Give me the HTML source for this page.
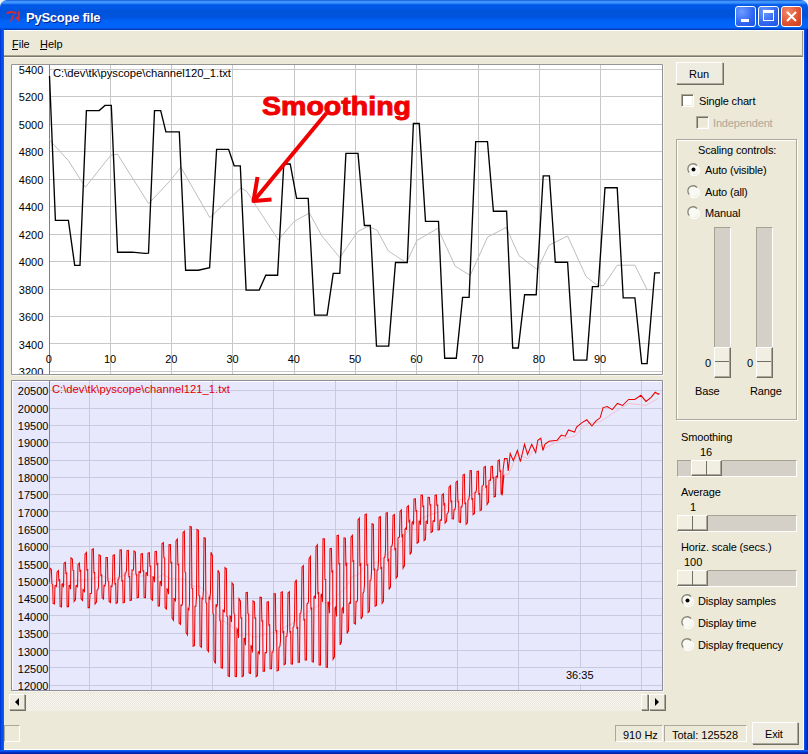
<!DOCTYPE html><html><head><meta charset="utf-8"><style>
*{margin:0;padding:0;box-sizing:border-box}
html,body{width:808px;height:754px;overflow:hidden;background:#ECE9D8;font-family:"Liberation Sans", sans-serif;font-size:11px;color:#000}
.a{position:absolute}
.t{position:absolute;white-space:nowrap;line-height:1}
.btn{position:absolute;background:#EEEBE0;border-top:1px solid #FFFFFF;border-left:1px solid #FFFFFF;border-right:1px solid #ACA899;border-bottom:1px solid #ACA899;box-shadow:1px 1px 0 #716F64}
.cb{position:absolute;width:13px;height:13px;border-top:1px solid #ACA899;border-left:1px solid #ACA899;border-right:1px solid #FFFFFF;border-bottom:1px solid #FFFFFF;background:#fff;box-shadow:inset 1px 1px 0 #716F64, inset -1px -1px 0 #F1EFE2}
.trk{position:absolute;background:#D4D0C8;border-top:1px solid #A5A291;border-left:1px solid #A5A291;border-right:1px solid #FFFFFF;border-bottom:1px solid #FFFFFF}
.thumb{position:absolute;background:#F1EFE2;border-top:1px solid #FFFFFF;border-left:1px solid #FFFFFF;border-right:1px solid #716F64;border-bottom:1px solid #716F64;box-shadow:inset -1px -1px 0 #ACA899}
.sunk{position:absolute;border-top:1px solid #ACA899;border-left:1px solid #ACA899;border-right:1px solid #FFFFFF;border-bottom:1px solid #FFFFFF}
</style></head><body>
<div class="a" style="left:0;top:0;width:10px;height:10px;background:#EEF0F4"></div>
<div class="a" style="left:798px;top:0;width:10px;height:10px;background:#EEF0F4"></div>
<div class="a" style="left:0;top:0;width:808px;height:30px;border-radius:7px 7px 0 0;background:linear-gradient(to bottom,#0A3FC0 0px,#3D95FF 1px,#3D95FF 3px,#1A6CF2 4px,#0058E8 5px,#0058E8 8px,#0054DC 10px,#0054DC 16px,#0057E2 18px,#0060F4 20px,#0064FA 24px,#0064FA 28px,#003DBB 29px,#003DBB 30px)"></div>
<div class="a" style="left:0;top:29px;width:4px;height:725px;background:linear-gradient(to right,#0020C0,#0050F0 1px,#0050F0 3px,#1E6AFA 4px)"></div>
<div class="a" style="left:804px;top:29px;width:4px;height:725px;background:linear-gradient(to right,#1060F8,#0040E0 1px,#0030C8 3px,#0018A0 4px)"></div>
<div class="a" style="left:4px;top:749px;width:800px;height:1px;background:#FFFFFF"></div>
<div class="a" style="left:803px;top:57px;width:1px;height:693px;background:#FFFFFF"></div>
<div class="a" style="left:802px;top:31px;width:1px;height:25px;background:#9C9A88"></div>
<div class="a" style="left:0;top:750px;width:808px;height:4px;background:linear-gradient(to bottom,#1E6AFA,#0050F0 1px,#0040D8 2px,#0020A8 3px)"></div>
<div class="a" style="left:4px;top:30px;width:800px;height:1px;background:#fff"></div>
<svg class="a" style="left:0;top:0" width="26" height="26"><path d="M7.5 13 Q11 11 15.5 13" stroke="#D82838" stroke-width="2.2" fill="none" stroke-linecap="round"/><path d="M13.5 15.5 L11 21" stroke="#C83040" stroke-width="1.8" fill="none" stroke-linecap="round"/><path d="M19 12 L18.5 20.5 M16 18.5 L19 16.5" stroke="#C83040" stroke-width="2" fill="none" stroke-linecap="round"/></svg>
<div class="t" style="left:26px;top:11px;font-size:13px;font-weight:bold;color:#fff;letter-spacing:-0.25px;text-shadow:1px 1px 0 #0A1E8C">PyScope file</div>
<div class="a" style="left:735px;top:6px;width:21px;height:21px;border:1px solid #fff;border-radius:3px;background:radial-gradient(circle at 30% 25%,#6E9BFF,#2F66F0 60%,#1E52E0)"></div>
<div class="a" style="left:758px;top:6px;width:21px;height:21px;border:1px solid #fff;border-radius:3px;background:radial-gradient(circle at 30% 25%,#6E9BFF,#2F66F0 60%,#1E52E0)"></div>
<div class="a" style="left:781px;top:6px;width:21px;height:21px;border:1px solid #fff;border-radius:3px;background:radial-gradient(circle at 30% 25%,#F08A6A,#E0502E 60%,#C8401E)"></div>
<div class="a" style="left:741px;top:19px;width:8px;height:3px;background:#fff"></div>
<div class="a" style="left:763px;top:10px;width:11px;height:11px;border:1px solid #fff;border-top-width:3px"></div>
<svg class="a" style="left:781px;top:6px" width="21" height="21"><path d="M6 6 L15 15 M15 6 L6 15" stroke="#fff" stroke-width="2"/></svg>
<div class="t" style="left:12px;top:39px;font-size:11px">File</div>
<div class="t" style="left:40px;top:39px;font-size:11px">Help</div>
<div class="a" style="left:12px;top:49px;width:6px;height:1px;background:#000"></div>
<div class="a" style="left:40px;top:49px;width:7px;height:1px;background:#000"></div>
<div class="a" style="left:4px;top:55px;width:799px;height:1px;background:#A8A490"></div>
<div class="a" style="left:4px;top:56px;width:799px;height:1px;background:#7A7868"></div>
<div class="a" style="left:4px;top:57px;width:799px;height:1px;background:#F8F6EE"></div>
<svg class="a" style="left:0;top:0" width="808" height="754" shape-rendering="auto"><defs><clipPath id="c1"><rect x="12" y="65" width="650" height="309"/></clipPath></defs><rect x="11" y="64" width="652" height="311" fill="#fff"/><path d="M11.5 374.5 V64.5 H662.5 V374.5 H11.5" stroke="#959595" fill="none"/><path d="M12.5 375.5 H663.5 V65" stroke="#F6F5EE" fill="none"/><path d="M50 69.5H662 M50 96.5H662 M50 124.5H662 M50 151.5H662 M50 179.5H662 M50 206.5H662 M50 234.5H662 M50 261.5H662 M50 289.5H662 M50 316.5H662 M50 343.5H662 M50 371.5H662 M110.5 65V374 M171.5 65V374 M232.5 65V374 M294.5 65V374 M355.5 65V374 M416.5 65V374 M478.5 65V374 M539.5 65V374 M600.5 65V374" stroke="#C8C8C8" stroke-width="1" fill="none" shape-rendering="crispEdges"/><path d="M49.5 65V374" stroke="#808080" stroke-width="1" shape-rendering="crispEdges"/><polyline points="49.5,139.6 50.5,141.1 68.3,160.5 85.4,187.2 110.7,155.3 117.4,154.1 148.6,203.6 170.4,180.5 180.8,167.1 209.8,217.6 241.0,187.9 246.9,191.6 278.2,239.8 294.5,221.2 309.4,213.0 322.0,236.1 339.8,257.6 357.7,231.6 368.1,226.4 377.0,230.1 388.4,251.0 406.4,262.7 417.0,240.4 437.8,228.3 455.2,266.1 470.2,275.4 487.6,237.1 506.2,227.4 519.0,255.7 537.4,269.6 549.0,245.2 567.6,236.0 586.1,276.6 597.7,285.7 603.6,285.6 617.2,265.2 634.9,265.2 647.1,289.6 660.0,289.6" stroke="#BEBEBE" stroke-width="1" fill="none"/><polyline points="49.5,76.0 55.4,220.3 68.4,220.3 74.7,265.3 80.0,265.3 86.4,110.6 99.2,110.6 105.0,105.4 111.3,105.4 117.6,252.2 132.0,252.2 145.0,253.3 148.5,253.2 154.5,110.6 160.7,110.6 165.9,131.9 179.3,131.9 185.6,270.2 198.4,270.2 209.6,267.7 216.6,149.3 228.6,149.3 234.2,165.8 240.3,165.8 246.1,290.1 259.2,290.1 265.8,275.2 277.6,275.2 283.8,164.0 290.2,164.0 296.6,198.4 308.2,198.4 314.6,315.1 327.1,315.1 333.2,273.3 339.8,273.3 345.9,153.4 358.0,153.4 364.4,225.5 370.3,225.5 376.5,346.1 388.7,346.1 395.5,262.5 407.3,262.5 413.4,123.5 419.2,123.5 425.5,221.3 438.5,221.3 444.7,358.2 456.3,358.2 462.6,297.4 469.1,297.4 475.7,141.6 487.5,141.6 493.4,211.2 506.6,211.2 512.7,348.0 518.3,348.0 524.6,294.7 536.2,294.7 543.2,175.8 549.4,175.8 555.3,262.2 567.6,262.2 573.8,360.1 586.8,360.1 592.4,286.6 598.3,286.6 605.0,187.7 617.2,187.7 623.2,297.8 634.9,297.8 641.7,363.6 647.1,363.6 654.7,272.8 660.0,272.8" stroke="#000" stroke-width="1.35" fill="none" stroke-linejoin="miter"/><text x="43.3" y="73.5" text-anchor="end" font-family='"Liberation Sans"' font-size="11" clip-path="url(#c1)">5400</text><text x="43.3" y="101.0" text-anchor="end" font-family='"Liberation Sans"' font-size="11" clip-path="url(#c1)">5200</text><text x="43.3" y="128.5" text-anchor="end" font-family='"Liberation Sans"' font-size="11" clip-path="url(#c1)">5000</text><text x="43.3" y="156.0" text-anchor="end" font-family='"Liberation Sans"' font-size="11" clip-path="url(#c1)">4800</text><text x="43.3" y="183.5" text-anchor="end" font-family='"Liberation Sans"' font-size="11" clip-path="url(#c1)">4600</text><text x="43.3" y="211.0" text-anchor="end" font-family='"Liberation Sans"' font-size="11" clip-path="url(#c1)">4400</text><text x="43.3" y="238.5" text-anchor="end" font-family='"Liberation Sans"' font-size="11" clip-path="url(#c1)">4200</text><text x="43.3" y="266.0" text-anchor="end" font-family='"Liberation Sans"' font-size="11" clip-path="url(#c1)">4000</text><text x="43.3" y="293.5" text-anchor="end" font-family='"Liberation Sans"' font-size="11" clip-path="url(#c1)">3800</text><text x="43.3" y="321.0" text-anchor="end" font-family='"Liberation Sans"' font-size="11" clip-path="url(#c1)">3600</text><text x="43.3" y="348.5" text-anchor="end" font-family='"Liberation Sans"' font-size="11" clip-path="url(#c1)">3400</text><text x="43.3" y="376.0" text-anchor="end" font-family='"Liberation Sans"' font-size="11" clip-path="url(#c1)">3200</text><text x="48.8" y="363" text-anchor="middle" font-family='"Liberation Sans"' font-size="11">0</text><text x="110.1" y="363" text-anchor="middle" font-family='"Liberation Sans"' font-size="11">10</text><text x="171.3" y="363" text-anchor="middle" font-family='"Liberation Sans"' font-size="11">20</text><text x="232.6" y="363" text-anchor="middle" font-family='"Liberation Sans"' font-size="11">30</text><text x="293.8" y="363" text-anchor="middle" font-family='"Liberation Sans"' font-size="11">40</text><text x="355.1" y="363" text-anchor="middle" font-family='"Liberation Sans"' font-size="11">50</text><text x="416.4" y="363" text-anchor="middle" font-family='"Liberation Sans"' font-size="11">60</text><text x="477.6" y="363" text-anchor="middle" font-family='"Liberation Sans"' font-size="11">70</text><text x="538.9" y="363" text-anchor="middle" font-family='"Liberation Sans"' font-size="11">80</text><text x="600.1" y="363" text-anchor="middle" font-family='"Liberation Sans"' font-size="11">90</text><text x="53" y="77" font-family='"Liberation Sans"' font-size="11" textLength="178" lengthAdjust="spacingAndGlyphs">C:\dev\tk\pyscope\channel120_1.txt</text><text x="262" y="114.5" font-family='"Liberation Sans"' font-weight="bold" font-size="25" fill="#F00000" stroke="#F00000" stroke-width="0.9" textLength="149" lengthAdjust="spacingAndGlyphs">Smoothing</text><path d="M326.5 113 L254.5 200" stroke="#F00000" stroke-width="4" fill="none"/><path d="M257.5 177 L253.5 201 L271.5 199.5" stroke="#F00000" stroke-width="4" fill="none" stroke-linejoin="round"/><rect x="11" y="380" width="652" height="311" fill="#E7E8FC"/><path d="M11.5 690.5 V380.5 H662.5 V690.5 H11.5" stroke="#8C8C9C" fill="none"/><path d="M12.5 691.5 H663.5 V381" stroke="#F6F5EE" fill="none"/><path d="M12.5 690 V381.5 H662" stroke="#FFFFFF" fill="none" shape-rendering="crispEdges"/><path d="M50 390.5H662 M50 408.5H662 M50 425.5H662 M50 442.5H662 M50 460.5H662 M50 477.5H662 M50 494.5H662 M50 511.5H662 M50 529.5H662 M50 546.5H662 M50 563.5H662 M50 581.5H662 M50 598.5H662 M50 615.5H662 M50 633.5H662 M50 650.5H662 M50 667.5H662 M50 685.5H662 M89.5 381V690 M151.5 381V690 M212.5 381V690 M273.5 381V690 M335.5 381V690 M396.5 381V690 M457.5 381V690 M518.5 381V690 M580.5 381V690 M641.5 381V690" stroke="#C9CADF" stroke-width="1" fill="none" shape-rendering="crispEdges"/><path d="M49.5 381V690" stroke="#808090" stroke-width="1" shape-rendering="crispEdges"/><polyline points="49.0,584.5 52.0,586.5 55.0,588.5 58.0,587.2 61.0,585.9 64.0,584.8 67.0,583.6 70.0,582.5 73.0,581.6 76.0,580.6 79.0,580.0 82.0,580.0 85.0,580.0 88.0,579.8 91.0,579.1 94.0,578.5 97.0,577.4 100.0,576.2 103.0,576.0 106.0,577.3 109.0,578.6 112.0,580.0 115.0,578.7 118.0,577.4 121.0,576.2 124.0,575.5 127.0,574.8 130.0,574.0 133.0,574.6 136.0,575.2 139.0,575.8 142.0,575.9 145.0,575.8 148.0,575.6 151.0,575.9 154.0,577.2 157.0,578.5 160.0,576.2 163.0,574.0 166.0,576.1 169.0,578.3 172.0,579.0 175.0,579.0 178.0,579.0 181.0,579.0 184.0,579.0 187.0,581.0 190.0,584.0 193.0,586.1 196.0,586.3 199.0,586.5 202.0,588.2 205.0,589.9 208.0,594.5 211.0,600.5 214.0,606.9 217.0,613.6 220.0,618.6 223.0,620.6 226.0,622.5 229.0,624.4 232.0,626.4 235.0,629.7 238.0,633.8 241.0,636.2 244.0,635.2 247.0,634.3 250.0,635.0 253.0,636.5 256.0,637.1 259.0,636.1 262.0,635.0 265.0,634.4 268.0,633.8 271.0,633.2 274.0,632.8 277.0,632.6 280.0,630.9 283.0,628.6 286.0,626.6 289.0,625.2 292.0,623.9 295.0,621.5 298.0,618.5 301.0,615.9 304.0,614.3 307.0,612.6 310.0,610.9 313.0,608.9 316.0,607.0 319.0,605.1 322.0,603.1 325.0,602.8 328.0,603.1 331.0,603.5 334.0,599.6 337.0,595.8 340.0,592.8 343.0,590.2 346.0,586.9 349.0,581.9 352.0,577.0 355.0,575.9 358.0,574.9 361.0,571.5 364.0,567.0 367.0,563.9 370.0,563.7 373.0,563.5 376.0,562.0 379.0,560.5 382.0,558.6 385.0,556.1 388.0,553.5 391.0,551.1 394.0,548.5 397.0,545.5 400.0,542.5 403.0,538.0 406.0,533.5 409.0,529.3 412.0,525.2 415.0,522.0 418.0,520.5 421.0,519.0 424.0,517.5 427.0,516.0 430.0,514.8 433.0,513.7 436.0,512.7 439.0,511.9 442.0,511.0 445.0,507.8 448.0,504.6 451.0,502.6 454.0,501.3 457.0,500.0 460.0,499.8 463.0,499.6 466.0,498.2 469.0,496.3 472.0,494.6 475.0,493.3 478.0,492.0 481.0,490.3 484.0,488.6 487.0,486.1 490.0,483.4 493.0,480.9 496.0,479.2 499.0,477.5 502.0,476.8 503.1,473.8 508.2,474.9 517.4,454.5 527.6,458.5 537.8,444.2 544.9,448.3 561.3,439.1 574.5,436.1 586.8,423.8 600.1,421.8 612.3,413.6 628.6,403.4 646.0,405.4 658.3,398.3" stroke="#F2C0CC" stroke-width="1" fill="none"/><polyline points="49.5,581.7 50.0,568.1 51.4,569.5 51.9,583.8 52.7,584.4 53.1,603.4 54.5,603.9 55.0,585.7 55.9,585.2 56.5,586.8 57.0,572.2 58.4,570.6 58.9,580.5 59.7,580.0 60.1,606.4 61.5,606.9 62.0,584.2 62.9,583.8 63.5,587.3 64.0,563.2 65.4,562.2 65.9,573.4 66.7,573.0 67.1,606.6 68.5,606.6 69.0,585.4 69.9,585.1 70.5,589.2 71.0,557.9 72.4,559.0 72.9,570.4 73.7,570.6 74.1,601.4 75.5,599.5 76.0,585.8 76.9,585.3 77.5,587.4 78.0,564.6 79.4,563.1 79.9,571.0 80.7,570.5 81.1,598.9 82.5,600.5 83.0,589.6 83.9,590.0 84.5,592.3 85.0,554.2 86.4,552.4 86.9,570.0 87.7,569.7 88.1,607.6 89.5,607.6 90.0,593.5 90.9,593.4 91.5,593.1 92.0,549.5 93.4,548.9 93.9,572.6 94.7,572.5 95.1,603.9 96.5,602.1 97.0,590.2 97.9,589.5 98.5,586.7 99.0,554.8 100.4,555.5 100.9,575.3 101.7,575.0 102.1,597.6 103.5,599.0 104.0,585.4 104.9,586.0 105.5,582.9 106.0,557.5 107.4,557.5 107.9,581.0 108.7,581.4 109.1,601.2 110.5,602.5 111.0,586.1 111.9,586.6 112.5,581.8 113.0,555.3 114.4,554.8 114.9,583.9 115.7,583.5 116.1,603.3 117.5,602.6 118.0,579.4 118.9,579.0 119.5,574.6 120.0,550.0 121.4,549.8 121.9,580.9 122.7,580.7 123.1,602.8 124.5,602.4 125.0,573.2 125.9,572.9 126.5,570.2 127.0,550.6 128.4,550.3 128.9,576.8 129.7,576.6 130.1,600.5 131.5,600.1 132.0,569.9 132.9,570.2 133.5,569.9 134.0,551.0 135.4,552.0 135.9,574.0 136.7,574.2 137.1,597.7 138.5,597.3 139.0,571.6 139.9,571.8 140.5,573.2 141.0,554.1 142.4,553.5 142.9,570.9 143.7,570.8 144.1,597.3 145.5,597.7 146.0,572.7 146.9,572.6 147.5,575.8 148.0,553.2 149.4,552.7 149.9,566.2 150.7,566.3 151.1,598.8 152.5,600.3 153.0,576.9 153.9,577.3 154.5,582.3 155.0,551.6 156.4,551.3 156.9,564.4 157.7,563.6 158.1,606.0 159.5,605.9 160.0,581.8 160.9,581.3 161.5,586.3 162.0,543.8 163.4,542.6 163.9,557.6 164.7,558.1 165.1,607.7 166.5,609.1 167.0,588.8 167.9,589.6 168.5,594.2 169.0,544.8 170.4,544.6 170.9,562.9 171.7,562.4 172.1,618.0 173.5,620.2 174.0,598.5 174.9,599.1 175.5,601.5 176.0,541.0 177.4,539.1 177.9,564.6 178.7,564.4 179.1,623.1 180.5,624.4 181.0,605.0 181.9,605.4 182.5,603.4 183.0,532.5 184.4,531.2 184.9,572.1 185.7,572.7 186.1,632.6 187.5,634.9 188.0,608.5 188.9,609.7 189.5,603.5 190.0,526.4 191.4,526.8 191.9,588.4 192.7,588.5 193.1,646.3 194.5,645.7 195.0,606.3 195.9,606.2 196.5,596.5 197.0,529.5 198.4,530.3 198.9,595.6 199.7,596.0 200.1,646.1 201.5,647.3 202.0,598.3 202.9,598.9 203.5,589.2 204.0,537.7 205.4,538.1 205.9,602.3 206.7,603.7 207.1,649.7 208.5,651.6 209.0,596.7 209.9,598.5 210.5,592.1 211.0,552.2 212.4,555.7 212.9,613.1 213.7,614.9 214.1,660.7 215.5,663.5 216.0,604.2 216.9,606.2 217.5,604.0 218.0,570.3 219.4,573.1 219.9,620.6 220.7,621.1 221.1,667.7 222.5,668.3 223.0,610.1 223.9,610.7 224.5,612.2 225.0,567.6 226.4,568.8 226.9,616.4 227.7,617.0 228.1,675.8 229.5,676.4 230.0,615.9 230.9,616.5 231.5,622.1 232.0,582.9 233.4,584.7 233.9,613.4 234.7,614.8 235.1,676.3 236.5,676.6 237.0,628.8 237.9,630.2 238.5,637.9 239.0,598.7 240.4,601.0 240.9,618.0 241.7,617.8 242.1,676.7 243.5,676.0 244.0,638.5 244.9,638.2 245.5,645.2 246.0,592.6 247.4,592.4 247.9,613.7 248.7,614.0 249.1,672.8 250.5,673.4 251.0,645.7 251.9,646.2 252.5,652.5 253.0,601.0 254.4,601.8 254.9,618.1 255.7,618.1 256.1,676.6 257.5,675.4 258.0,652.0 258.9,651.5 259.5,654.5 260.0,597.2 261.4,597.4 261.9,621.0 262.7,620.8 263.1,671.3 264.5,671.3 265.0,652.7 265.9,652.6 266.5,652.7 267.0,602.2 268.4,601.7 268.9,625.1 269.7,624.9 270.1,668.8 271.5,668.7 272.0,652.2 272.9,652.1 273.5,648.9 274.0,593.8 275.4,593.8 275.9,630.8 276.7,630.7 277.1,670.9 278.5,670.2 279.0,647.5 279.9,646.6 280.5,640.7 281.0,592.3 282.4,591.8 282.9,632.3 283.7,631.6 284.1,664.8 285.5,663.8 286.0,636.4 286.9,636.2 287.5,629.6 288.0,592.9 289.4,591.6 289.9,632.1 290.7,631.8 291.1,663.9 292.5,664.1 293.0,627.5 293.9,626.6 294.5,619.4 295.0,582.5 296.4,579.8 296.9,628.1 297.7,627.5 298.1,662.3 299.5,662.3 300.0,613.6 300.9,613.0 301.5,607.5 302.0,567.2 303.4,565.6 303.9,619.9 304.7,619.5 305.1,660.0 306.5,659.9 307.0,603.9 307.9,603.3 308.5,601.4 309.0,558.8 310.4,556.4 310.9,608.6 311.7,608.1 312.1,661.6 313.5,662.1 314.0,596.8 314.9,596.0 315.5,598.8 316.0,546.6 317.4,544.8 317.9,593.4 318.7,592.8 319.1,664.9 320.5,664.9 321.0,594.8 321.9,594.1 322.5,601.9 323.0,538.8 324.4,538.8 324.9,579.3 325.7,579.4 326.1,667.1 327.5,667.4 328.0,602.1 328.9,602.3 329.5,613.3 330.0,548.7 331.4,548.4 331.9,571.8 332.7,571.0 333.1,659.3 334.5,656.8 335.0,608.0 335.9,606.8 336.5,616.4 337.0,535.6 338.4,535.2 338.9,563.8 339.7,563.7 340.1,644.9 341.5,641.7 342.0,608.8 342.9,607.5 343.5,613.4 344.0,537.9 345.4,538.1 345.9,564.8 346.7,563.6 347.1,633.4 348.5,630.6 349.0,603.8 349.9,602.2 350.5,603.7 351.0,537.1 352.4,535.3 352.9,561.3 353.7,560.7 354.1,623.2 355.5,624.1 356.0,601.7 356.9,601.8 357.5,600.2 358.0,519.9 359.4,518.1 359.9,565.1 360.7,564.0 361.1,619.1 362.5,616.2 363.0,593.2 363.9,591.6 364.5,584.8 365.0,514.5 366.4,514.0 366.9,565.0 367.7,564.9 368.1,612.5 369.5,611.1 370.0,580.6 370.9,580.2 371.5,572.6 372.0,523.8 373.4,524.3 373.9,569.6 374.7,569.2 375.1,606.1 376.5,605.4 377.0,570.2 377.9,569.8 378.5,561.8 379.0,517.3 380.4,516.6 380.9,568.4 381.7,567.7 382.1,603.3 383.5,601.2 384.0,558.0 384.9,557.2 385.5,550.7 386.0,513.1 387.4,512.7 387.9,560.4 388.7,559.6 389.1,589.6 390.5,586.8 391.0,546.8 391.9,546.2 392.5,543.1 393.0,515.6 394.4,514.6 394.9,549.5 395.7,548.7 396.1,578.0 397.5,576.2 398.0,538.1 398.9,537.3 399.5,537.0 400.0,511.4 401.4,509.8 401.9,536.4 402.7,535.2 403.1,568.1 404.5,565.5 405.0,529.3 405.9,528.0 406.5,529.9 407.0,506.9 408.4,505.7 408.9,521.5 409.7,520.5 410.1,554.6 411.5,551.8 412.0,522.7 412.9,521.5 413.5,524.6 414.0,499.2 415.4,498.7 415.9,511.1 416.7,510.8 417.1,543.3 418.5,542.3 419.0,521.3 419.9,520.9 420.5,524.8 421.0,495.2 422.4,495.0 422.9,506.6 423.7,506.3 424.1,540.5 425.5,539.3 426.0,521.6 426.9,521.0 427.5,524.0 428.0,497.3 429.4,497.4 429.9,504.9 430.7,504.8 431.1,532.5 432.5,531.4 433.0,521.0 433.9,520.5 434.5,521.9 435.0,495.4 436.4,495.0 436.9,505.4 437.7,505.1 438.1,530.1 439.5,529.7 440.0,520.2 440.9,519.9 441.5,520.1 442.0,495.1 443.4,493.9 443.9,504.7 444.7,503.8 445.1,523.1 446.5,521.3 447.0,514.0 447.9,513.0 448.5,511.1 449.0,487.2 450.4,485.6 450.9,501.4 451.7,501.0 452.1,518.7 453.5,518.9 454.0,509.8 454.9,509.7 455.5,506.8 456.0,482.2 457.4,481.0 457.9,501.8 458.7,501.8 459.1,521.8 460.5,522.5 461.0,506.9 461.9,507.0 462.5,502.7 463.0,475.1 464.4,474.3 464.9,503.6 465.7,503.1 466.1,524.3 467.5,522.9 468.0,500.0 468.9,499.3 469.5,494.9 470.0,470.7 471.4,470.5 471.9,499.2 472.7,498.8 473.1,514.6 474.5,513.4 475.0,492.3 475.9,492.0 476.5,489.2 477.0,471.4 478.4,471.1 478.9,494.2 479.7,493.7 480.1,510.5 481.5,509.9 482.0,486.3 482.9,485.7 483.5,484.5 484.0,467.2 485.4,466.4 485.9,487.0 486.7,486.2 487.1,504.5 488.5,502.2 489.0,480.5 489.9,479.8 490.5,480.2 491.0,466.7 492.4,466.2 492.9,478.0 493.7,477.5 494.1,496.9 495.5,496.3 496.0,476.6 496.9,476.0 497.5,477.7 498.0,460.8 499.4,459.9 499.9,471.2 500.7,470.9 501.1,493.6 502.5,493.6 503.0,475.8 503.9,475.8 502.0,495.4 503.1,469.8 504.5,458.6 507.1,458.6 508.2,470.9 510.2,453.5 513.3,460.7 517.4,450.5 520.4,461.7 524.5,444.3 527.6,454.5 531.7,444.3 535.7,452.5 537.8,440.2 540.8,438.2 542.9,450.5 544.9,444.3 549.0,441.3 557.2,440.2 561.3,435.1 565.3,436.2 568.4,430.0 574.5,432.1 576.6,427.0 581.7,422.9 586.8,419.8 591.9,426.0 596.0,420.8 600.1,417.8 603.1,407.6 607.2,406.5 612.3,409.6 617.4,403.5 622.5,405.5 628.6,399.4 634.8,399.4 640.9,395.3 646.0,401.4 651.1,397.4 655.2,392.3 658.3,394.3 659.3,393.3" stroke="#EE0000" stroke-width="1.05" fill="none"/><text x="48.4" y="395.2" text-anchor="end" font-family='"Liberation Sans"' font-size="11">20500</text><text x="48.4" y="412.6" text-anchor="end" font-family='"Liberation Sans"' font-size="11">20000</text><text x="48.4" y="429.9" text-anchor="end" font-family='"Liberation Sans"' font-size="11">19500</text><text x="48.4" y="447.2" text-anchor="end" font-family='"Liberation Sans"' font-size="11">19000</text><text x="48.4" y="464.6" text-anchor="end" font-family='"Liberation Sans"' font-size="11">18500</text><text x="48.4" y="481.9" text-anchor="end" font-family='"Liberation Sans"' font-size="11">18000</text><text x="48.4" y="499.3" text-anchor="end" font-family='"Liberation Sans"' font-size="11">17500</text><text x="48.4" y="516.6" text-anchor="end" font-family='"Liberation Sans"' font-size="11">17000</text><text x="48.4" y="534.0" text-anchor="end" font-family='"Liberation Sans"' font-size="11">16500</text><text x="48.4" y="551.4" text-anchor="end" font-family='"Liberation Sans"' font-size="11">16000</text><text x="48.4" y="568.7" text-anchor="end" font-family='"Liberation Sans"' font-size="11">15500</text><text x="48.4" y="586.0" text-anchor="end" font-family='"Liberation Sans"' font-size="11">15000</text><text x="48.4" y="603.4" text-anchor="end" font-family='"Liberation Sans"' font-size="11">14500</text><text x="48.4" y="620.8" text-anchor="end" font-family='"Liberation Sans"' font-size="11">14000</text><text x="48.4" y="638.1" text-anchor="end" font-family='"Liberation Sans"' font-size="11">13500</text><text x="48.4" y="655.5" text-anchor="end" font-family='"Liberation Sans"' font-size="11">13000</text><text x="48.4" y="672.8" text-anchor="end" font-family='"Liberation Sans"' font-size="11">12500</text><text x="48.4" y="690.2" text-anchor="end" font-family='"Liberation Sans"' font-size="11">12000</text><text x="52" y="393" font-family='"Liberation Sans"' font-size="11" fill="#E00000" textLength="178" lengthAdjust="spacingAndGlyphs">C:\dev\tk\pyscope\channel121_1.txt</text><rect x="565" y="668" width="29" height="16" fill="#E7E8FC"/><text x="566" y="679" font-family='"Liberation Sans"' font-size="11">36:35</text></svg>
<div class="a" style="left:26px;top:693px;width:616px;height:18px;background:repeating-conic-gradient(#F8F7F2 0 25%,#E8E6DA 0 50%) 0 0/2px 2px"></div>
<div class="btn" style="left:9px;top:694px;width:16px;height:16px"></div>
<svg class="a" style="left:9px;top:694px" width="16" height="16"><path d="M10 4 L6 8 L10 12Z" fill="#000"/></svg>
<div class="btn" style="left:641px;top:694px;width:7px;height:16px"></div>
<div class="btn" style="left:649px;top:694px;width:16px;height:16px"></div>
<svg class="a" style="left:649px;top:694px" width="16" height="16"><path d="M6 4 L10 8 L6 12Z" fill="#000"/></svg>
<div class="sunk" style="left:4px;top:725px;width:16px;height:17px"></div>
<div class="sunk" style="left:615px;top:725px;width:48px;height:17px"></div>
<div class="t" style="left:623px;top:730px">910 Hz</div>
<div class="sunk" style="left:664px;top:725px;width:83px;height:17px"></div>
<div class="t" style="left:672px;top:730px">Total: 125528</div>
<div class="btn" style="left:752px;top:722px;width:46px;height:22px"></div>
<div class="t" style="letter-spacing:-0.15px;left:765px;top:729px">Exit</div>
<div class="btn" style="left:676px;top:62px;width:47px;height:22px"></div>
<div class="t" style="left:689px;top:69px">Run</div>
<div class="cb" style="left:681px;top:94px"></div>
<div class="t" style="letter-spacing:-0.15px;left:699px;top:96px">Single chart</div>
<div class="cb" style="left:696px;top:116px;background:#ECE9D8"></div>
<div class="t" style="letter-spacing:-0.15px;left:713px;top:118px;color:#ACA899">Independent</div>
<div class="a" style="left:676px;top:139px;width:121px;height:281px;border:1px solid #ACA899;box-shadow:inset 1px 1px 0 #fff, 1px 1px 0 #fff"></div>
<div class="t" style="letter-spacing:-0.15px;left:698px;top:145px">Scaling controls:</div>
<svg class="a" style="left:687px;top:163px" width="14" height="14"><circle cx="6.5" cy="6.5" r="5" fill="#FAFAF4"/><path d="M2.2 9.5 A5 5 0 0 1 10 2.5" stroke="#8A887C" stroke-width="1.3" fill="none"/><path d="M3.5 11 A5 5 0 0 0 11 3.8" stroke="#FFFFFF" stroke-width="1.2" fill="none"/><circle cx="6.5" cy="6.5" r="2" fill="#000"/></svg>
<div class="t" style="letter-spacing:-0.15px;left:705px;top:165px">Auto (visible)</div>
<svg class="a" style="left:687px;top:185px" width="14" height="14"><circle cx="6.5" cy="6.5" r="5" fill="#FAFAF4"/><path d="M2.2 9.5 A5 5 0 0 1 10 2.5" stroke="#8A887C" stroke-width="1.3" fill="none"/><path d="M3.5 11 A5 5 0 0 0 11 3.8" stroke="#FFFFFF" stroke-width="1.2" fill="none"/></svg>
<div class="t" style="letter-spacing:-0.15px;left:705px;top:187px">Auto (all)</div>
<svg class="a" style="left:687px;top:206px" width="14" height="14"><circle cx="6.5" cy="6.5" r="5" fill="#FAFAF4"/><path d="M2.2 9.5 A5 5 0 0 1 10 2.5" stroke="#8A887C" stroke-width="1.3" fill="none"/><path d="M3.5 11 A5 5 0 0 0 11 3.8" stroke="#FFFFFF" stroke-width="1.2" fill="none"/></svg>
<div class="t" style="letter-spacing:-0.15px;left:705px;top:208px">Manual</div>
<div class="trk" style="left:714px;top:227px;width:17px;height:150px"></div>
<div class="trk" style="left:756px;top:227px;width:17px;height:150px"></div>
<div class="thumb" style="left:714px;top:347px;width:17px;height:31px"></div>
<div class="a" style="left:715px;top:361px;width:14px;height:1px;background:#716F64"></div>
<div class="thumb" style="left:756px;top:347px;width:17px;height:31px"></div>
<div class="a" style="left:757px;top:361px;width:14px;height:1px;background:#716F64"></div>
<div class="t" style="left:705px;top:358px">0</div>
<div class="t" style="left:747px;top:358px">0</div>
<div class="t" style="letter-spacing:-0.15px;left:695px;top:386px">Base</div>
<div class="t" style="letter-spacing:-0.15px;left:750px;top:386px">Range</div>
<div class="t" style="letter-spacing:-0.15px;left:681px;top:432px">Smoothing</div>
<div class="t" style="left:700px;top:447px">16</div>
<div class="trk" style="left:677px;top:460px;width:120px;height:17px"></div>
<div class="thumb" style="left:691px;top:460px;width:31px;height:16px"></div>
<div class="a" style="left:706px;top:461px;width:1px;height:14px;background:#716F64"></div>
<div class="t" style="letter-spacing:-0.15px;left:681px;top:487px">Average</div>
<div class="t" style="left:690px;top:502px">1</div>
<div class="trk" style="left:677px;top:515px;width:120px;height:17px"></div>
<div class="thumb" style="left:677px;top:515px;width:31px;height:16px"></div>
<div class="a" style="left:692px;top:516px;width:1px;height:14px;background:#716F64"></div>
<div class="t" style="letter-spacing:-0.15px;left:681px;top:542px">Horiz. scale (secs.)</div>
<div class="t" style="left:684px;top:557px">100</div>
<div class="trk" style="left:677px;top:570px;width:120px;height:17px"></div>
<div class="thumb" style="left:677px;top:570px;width:31px;height:16px"></div>
<div class="a" style="left:692px;top:571px;width:1px;height:14px;background:#716F64"></div>
<svg class="a" style="left:681px;top:594px" width="14" height="14"><circle cx="6.5" cy="6.5" r="5" fill="#FAFAF4"/><path d="M2.2 9.5 A5 5 0 0 1 10 2.5" stroke="#8A887C" stroke-width="1.3" fill="none"/><path d="M3.5 11 A5 5 0 0 0 11 3.8" stroke="#FFFFFF" stroke-width="1.2" fill="none"/><circle cx="6.5" cy="6.5" r="2" fill="#000"/></svg>
<div class="t" style="letter-spacing:-0.15px;left:698px;top:596px">Display samples</div>
<svg class="a" style="left:681px;top:616px" width="14" height="14"><circle cx="6.5" cy="6.5" r="5" fill="#FAFAF4"/><path d="M2.2 9.5 A5 5 0 0 1 10 2.5" stroke="#8A887C" stroke-width="1.3" fill="none"/><path d="M3.5 11 A5 5 0 0 0 11 3.8" stroke="#FFFFFF" stroke-width="1.2" fill="none"/></svg>
<div class="t" style="letter-spacing:-0.15px;left:698px;top:618px">Display time</div>
<svg class="a" style="left:681px;top:638px" width="14" height="14"><circle cx="6.5" cy="6.5" r="5" fill="#FAFAF4"/><path d="M2.2 9.5 A5 5 0 0 1 10 2.5" stroke="#8A887C" stroke-width="1.3" fill="none"/><path d="M3.5 11 A5 5 0 0 0 11 3.8" stroke="#FFFFFF" stroke-width="1.2" fill="none"/></svg>
<div class="t" style="letter-spacing:-0.15px;left:698px;top:640px">Display frequency</div>
</body></html>
